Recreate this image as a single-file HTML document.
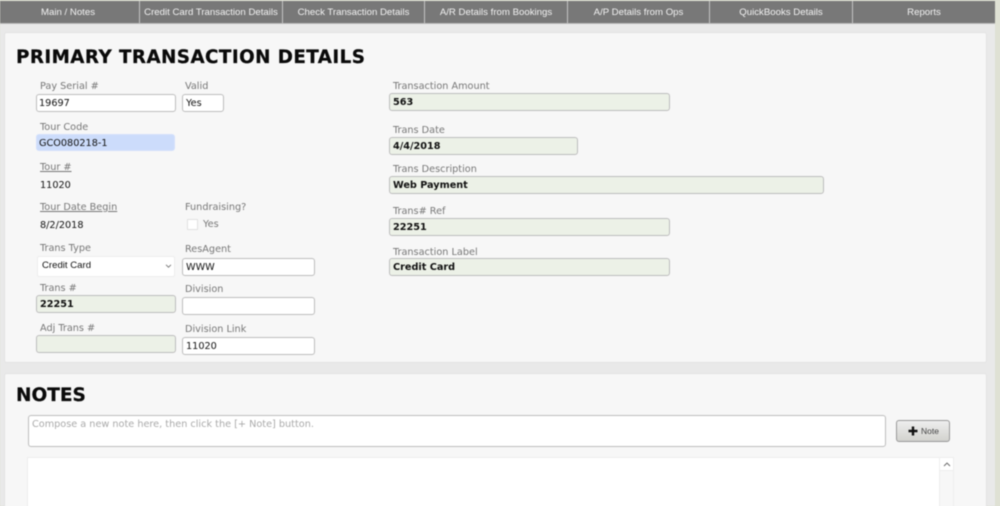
<!DOCTYPE html>
<html><head><meta charset="utf-8">
<style>
*{box-sizing:border-box}
html,body{margin:0;padding:0;width:1000px;height:506px;overflow:hidden;background:#dfe1d4}
body{position:relative;font-family:"DejaVu Sans",sans-serif;}
#wrap{position:absolute;left:0;top:0;width:1000px;height:506px;filter:blur(.4px)}
#bg{position:absolute;left:0;top:23px;width:995px;height:483px;background:#e9e9e9}
#nav{position:absolute;left:0;top:1px;width:995px;height:23px;background:#787878;border-bottom:1px solid #bbb}
#nav div{position:absolute;top:0;height:22px;text-align:center;color:#f2f2f2;font:9.65px/23px "Liberation Sans",sans-serif;border-right:1px solid #c4c4c4;white-space:nowrap}
.panel{position:absolute;left:4px;width:983px;background:#f7f7f7;border:1px solid #e3e3e3;border-radius:3px}
h1{position:absolute;left:16px;margin:0;font:bold 18.3px/22px "DejaVu Sans",sans-serif;color:#0a0a0a;white-space:nowrap;-webkit-text-stroke:.25px #0a0a0a}
.l{position:absolute;font-size:9.7px;line-height:12px;color:#777;white-space:nowrap;margin-top:1px}
.u{text-decoration:underline}
.i{position:absolute;height:18px;border:1px solid #bdbdbd;border-radius:3px;background:#fff;font-size:9.7px;line-height:18px;padding-left:3px;color:#111;white-space:nowrap}
.g{background:#ecf1e7;font-weight:bold;color:#111}
.t{position:absolute;font-size:9.7px;line-height:12px;color:#111;white-space:nowrap;margin-top:1px}
</style></head><body><div id="wrap">
<div id="bg"></div>
<div id="nav">
<div style="left:0;width:140px;padding-right:3px">Main / Notes</div>
<div style="left:140px;width:143px">Credit Card Transaction Details</div>
<div style="left:283px;width:142px">Check Transaction Details</div>
<div style="left:425px;width:143px">A/R Details from Bookings</div>
<div style="left:568px;width:142px">A/P Details from Ops</div>
<div style="left:710px;width:143px">QuickBooks Details</div>
<div style="left:853px;width:142px;border:0">Reports</div>
</div>
<div class="panel" style="top:32px;height:331px"></div>
<h1 style="top:47px;letter-spacing:.46px">PRIMARY TRANSACTION DETAILS</h1>

<div class="l" style="left:40px;top:80px">Pay Serial #</div>
<div class="l" style="left:185px;top:80px">Valid</div>
<div class="i" style="left:36px;top:94px;width:140px;padding-left:2px">19697</div>
<div class="i" style="left:182px;top:94px;width:42px">Yes</div>

<div class="l" style="left:40px;top:121px">Tour Code</div>
<div class="i" style="left:36px;top:134px;width:139px;height:17px;background:#ccdcfb;border-color:#d4e1fb;padding-left:2px;line-height:17px">GCO080218-1</div>

<div class="l u" style="left:40px;top:161px">Tour #</div>
<div class="t" style="left:40px;top:179px">11020</div>

<div class="l u" style="left:40px;top:201px">Tour Date Begin</div>
<div class="l" style="left:185px;top:201px">Fundraising?</div>
<div class="t" style="left:40px;top:219px">8/2/2018</div>
<div style="position:absolute;left:187px;top:219px;width:11px;height:11px;background:#fff;border:1px solid #e2e2e2"></div>
<div class="l" style="left:203px;top:218px">Yes</div>

<div class="l" style="left:40px;top:242px">Trans Type</div>
<div class="l" style="left:185px;top:243px">ResAgent</div>
<div style="position:absolute;left:37px;top:256px;width:138px;height:21px;background:#fff;border:1px solid #eee;border-radius:2px;font:9.6px/17px 'Liberation Sans',sans-serif;color:#111;padding-left:4px">Credit Card
<svg style="position:absolute;left:127px;top:7px" width="7" height="4" viewBox="0 0 7 4"><path d="M1 .8l2.5 2.4L6 .8" fill="none" stroke="#777" stroke-width=".9"/></svg></div>
<div class="i" style="left:182px;top:258px;width:133px">WWW</div>

<div class="l" style="left:40px;top:282px">Trans #</div>
<div class="l" style="left:185px;top:283px">Division</div>
<div class="i g" style="left:36px;top:295px;width:140px">22251</div>
<div class="i" style="left:182px;top:297px;width:133px"></div>

<div class="l" style="left:40px;top:322px">Adj Trans #</div>
<div class="l" style="left:185px;top:323px">Division Link</div>
<div class="i g" style="left:36px;top:335px;width:140px"></div>
<div class="i" style="left:182px;top:337px;width:133px">11020</div>

<div class="l" style="left:393px;top:80px">Transaction Amount</div>
<div class="i g" style="left:389px;top:93px;width:281px">563</div>
<div class="l" style="left:393px;top:124px">Trans Date</div>
<div class="i g" style="left:389px;top:137px;width:189px">4/4/2018</div>
<div class="l" style="left:393px;top:163px">Trans Description</div>
<div class="i g" style="left:389px;top:176px;width:435px">Web Payment</div>
<div class="l" style="left:393px;top:205px">Trans# Ref</div>
<div class="i g" style="left:389px;top:218px;width:281px">22251</div>
<div class="l" style="left:393px;top:246px">Transaction Label</div>
<div class="i g" style="left:389px;top:258px;width:281px">Credit Card</div>

<div class="panel" style="top:373px;height:140px"></div>
<h1 style="top:385px;font-size:18.5px">NOTES</h1>
<div class="i" style="left:28px;top:415px;width:858px;height:32px;color:#aaa;line-height:18px">Compose a new note here, then click the [+ Note] button.</div>
<div style="position:absolute;left:896px;top:420px;width:54px;height:22px;border:1px solid #999;border-radius:3px;background:linear-gradient(#eee,#d2d2ce);font:8.5px/21px 'Liberation Sans',sans-serif;color:#444;padding-left:24px">Note
<svg style="position:absolute;left:11px;top:5px" width="10" height="10" viewBox="0 0 10 10"><path d="M5 .5v9M.5 5h9" stroke="#111" stroke-width="2.4"/></svg></div>
<div style="position:absolute;left:27px;top:457px;width:927px;height:60px;background:#fff;border:1px solid #eee"></div>
<div style="position:absolute;left:939px;top:458px;width:14px;height:60px;background:#f7f7f7;border-left:1px solid #eee"></div>
<div style="position:absolute;left:940px;top:458px;width:13px;height:13px;background:#fff;border-bottom:1px solid #eee"></div>
<svg style="position:absolute;left:943px;top:462px" width="8" height="5" viewBox="0 0 8 5"><path d="M1 4l3-3 3 3" fill="none" stroke="#666" stroke-width=".9"/></svg>
</div></body></html>
